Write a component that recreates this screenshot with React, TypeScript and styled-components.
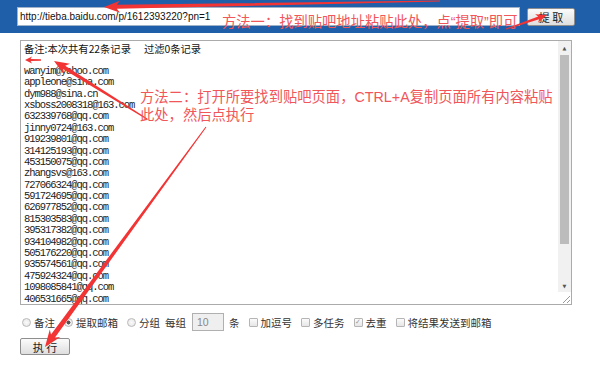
import * as React from "react";
import styled, { createGlobalStyle } from "styled-components";

const GlobalStyle = createGlobalStyle`
  html, body {
    margin: 0;
    padding: 0;
    background: #fff;
  }
  body {
    font-family: "Noto Sans CJK SC", "Liberation Sans", sans-serif;
  }
`;

const emails = [
  "wanyim@yahoo.com",
  "appleone@sina.com",
  "dym988@sina.cn",
  "xsboss2008318@163.com",
  "632339768@qq.com",
  "jinny0724@163.com",
  "919239801@qq.com",
  "314125193@qq.com",
  "453150075@qq.com",
  "zhangsvs@163.com",
  "727066324@qq.com",
  "591724695@qq.com",
  "626977852@qq.com",
  "815303583@qq.com",
  "395317382@qq.com",
  "934104982@qq.com",
  "505176220@qq.com",
  "935574561@qq.com",
  "475924324@qq.com",
  "1098085841@qq.com",
  "406531665@qq.com",
  "583201764@qq.com",
];

type Arrow = {
  x1: number;
  y1: number;
  x2: number;
  y2: number;
  tail: number;
  shaft: number;
  headLen: number;
  headW: number;
};

const arrows: Arrow[] = [
  { x1: 440, y1: 1, x2: 104, y2: 7, tail: 1, shaft: 4, headLen: 16, headW: 12 },
  { x1: 506, y1: 29, x2: 547, y2: 15, tail: 1, shaft: 3, headLen: 11, headW: 9 },
  { x1: 206, y1: 127, x2: 45, y2: 347, tail: 1, shaft: 5, headLen: 17, headW: 13 },
  { x1: 147, y1: 119, x2: 54, y2: 61, tail: 1, shaft: 4, headLen: 15, headW: 12 },
  { x1: 41, y1: 60, x2: 25, y2: 60, tail: 1.5, shaft: 2, headLen: 7, headW: 7 },
];

// tapered arrow outline: thin tail, thicker shaft, head with barbs
const arrowPoints = (a: Arrow) => {
  const dx = a.x2 - a.x1;
  const dy = a.y2 - a.y1;
  const len = Math.hypot(dx, dy);
  const ux = dx / len;
  const uy = dy / len;
  const px = -uy;
  const py = ux;
  const bx = a.x2 - ux * a.headLen;
  const by = a.y2 - uy * a.headLen;
  const nx = a.x2 - ux * a.headLen * 0.8;
  const ny = a.y2 - uy * a.headLen * 0.8;
  const pts = [
    [a.x1 + (px * a.tail) / 2, a.y1 + (py * a.tail) / 2],
    [nx + (px * a.shaft) / 2, ny + (py * a.shaft) / 2],
    [bx + (px * a.headW) / 2, by + (py * a.headW) / 2],
    [a.x2, a.y2],
    [bx - (px * a.headW) / 2, by - (py * a.headW) / 2],
    [nx - (px * a.shaft) / 2, ny - (py * a.shaft) / 2],
    [a.x1 - (px * a.tail) / 2, a.y1 - (py * a.tail) / 2],
  ];
  return pts.map((p) => `${p[0].toFixed(1)},${p[1].toFixed(1)}`).join(" ");
};

type Opt = { kind: "radio" | "check"; label: string; checked?: boolean };

const App: React.FunctionComponent = () => {
  const before: Opt[] = [
    { kind: "radio", label: "备注" },
    { kind: "radio", label: "提取邮箱", checked: true },
    { kind: "radio", label: "分组" },
  ];
  const after: Opt[] = [
    { kind: "check", label: "加逗号" },
    { kind: "check", label: "多任务" },
    { kind: "check", label: "去重", checked: true },
    { kind: "check", label: "将结果发送到邮箱" },
  ];

  const renderOpt = (o: Opt) => (
    <Option key={o.label}>
      {o.kind === "radio" ? (
        <RadioBox checked={!!o.checked} />
      ) : (
        <CheckBox>{o.checked ? "✓" : ""}</CheckBox>
      )}
      <span>{o.label}</span>
    </Option>
  );

  return (
    <Page>
      <GlobalStyle />
      <TopBar>
        <UrlBox>http://tieba.baidu.com/p/1612393220?pn=1</UrlBox>
        <GrayButton $w={48} $h={18}>
          提 取
        </GrayButton>
      </TopBar>
      <Main>
        <TextBox>
          <Lines>
            <NoteLine>
              备注:本次共有22条记录
              <Spacer />
              过滤0条记录
            </NoteLine>
            <Line />
            {emails.map((e) => (
              <Line key={e}>{e}</Line>
            ))}
          </Lines>
          <ScrollBar>
            <ScrollBtn>▲</ScrollBtn>
            <Track>
              <Thumb />
            </Track>
            <ScrollBtn>▼</ScrollBtn>
            <Grip>
              <svg width="11" height="11" viewBox="0 0 11 11">
                <path d="M10 3 L3 10 M10 7 L7 10" stroke="#9a9a9a" strokeWidth="1" />
              </svg>
            </Grip>
          </ScrollBar>
        </TextBox>
        <Options>
          {before.map(renderOpt)}
          <Plain>每组</Plain>
          <CountBox>10</CountBox>
          <Plain>条</Plain>
          {after.map(renderOpt)}
        </Options>
        <GrayButton $w={50} $h={17}>
          执 行
        </GrayButton>
      </Main>

      <Overlay width="600" height="366" viewBox="0 0 600 366">
        {arrows.map((a, i) => (
          <polygon key={i} points={arrowPoints(a)} fill="#f23434" />
        ))}
      </Overlay>
      <Annotation $left={222} $top={13}>
        方法一：找到贴吧地址粘贴此处，点“提取”即可
      </Annotation>
      <Annotation $left={140} $top={88}>
        方法二：打开所要找到贴吧页面，CTRL+A复制页面所有内容粘贴
        <br />
        此处，然后点执行
      </Annotation>
    </Page>
  );
};

export default App;

const Page = styled.div`
  position: relative;
  width: 600px;
  height: 366px;
  overflow: hidden;
  background: #fff;
`;

const TopBar = styled.div`
  height: 33px;
  background: #1f5fa9;
  display: flex;
  align-items: center;
  padding-left: 17px;
  gap: 7px;
`;

const UrlBox = styled.div`
  box-sizing: border-box;
  width: 503px;
  height: 19px;
  background: #fff;
  border: 1px solid #9fb2c8;
  padding-left: 2px;
  font-family: "Liberation Sans", Arial, sans-serif;
  font-size: 10px;
  line-height: 17px;
  color: #111;
  white-space: nowrap;
  overflow: hidden;
`;

const GrayButton = styled.div<{ $w: number; $h: number }>`
  box-sizing: border-box;
  width: ${(p) => p.$w}px;
  height: ${(p) => p.$h}px;
  border: 1px solid #8e8e8e;
  border-radius: 2px;
  background: linear-gradient(#fbfbfb, #dedede);
  display: flex;
  align-items: center;
  justify-content: center;
  font-family: "Noto Sans CJK SC", sans-serif;
  font-size: 11px;
  color: #222;
  white-space: pre;
`;

const Main = styled.div`
  padding: 7px 0 0 20px;
  display: flex;
  flex-direction: column;
`;

const TextBox = styled.div`
  box-sizing: border-box;
  width: 552px;
  height: 265px;
  border: 1px solid #ababab;
  display: flex;
  overflow: hidden;
`;

const Lines = styled.div`
  flex: 1;
  padding: 2px 0 0 3px;
  overflow: hidden;
`;

const Line = styled.div`
  height: 11.4px;
  line-height: 11.4px;
  font-family: "Liberation Mono", monospace;
  font-size: 10.5px;
  letter-spacing: -1.05px;
  color: #222;
  white-space: nowrap;
`;

const NoteLine = styled.div`
  height: 11.4px;
  line-height: 11.4px;
  font-family: "Noto Sans CJK SC", sans-serif;
  font-size: 10.3px;
  color: #111;
  white-space: nowrap;
`;

const Spacer = styled.span`
  display: inline-block;
  width: 13px;
`;

const ScrollBar = styled.div`
  width: 13px;
  background: #f1f1f1;
  display: flex;
  flex-direction: column;
`;

const ScrollBtn = styled.div`
  height: 13px;
  display: flex;
  align-items: center;
  justify-content: center;
  font-size: 5px;
  color: #555;
  font-family: "DejaVu Sans", sans-serif;
`;

const Track = styled.div`
  flex: 1;
  padding: 1px 2px;
  display: flex;
  flex-direction: column;
`;

const Thumb = styled.div`
  height: 189px;
  background: #bcbcbc;
`;

const Grip = styled.div`
  height: 12px;
  background: #fff;
  display: flex;
  align-items: flex-end;
  justify-content: flex-end;
`;

const Options = styled.div`
  display: flex;
  align-items: center;
  height: 18px;
  margin: 8px 0 7px 2px;
  font-family: "Noto Sans CJK SC", sans-serif;
  font-size: 10.5px;
  color: #333;
  gap: 9px;
`;

const Option = styled.label`
  display: flex;
  align-items: center;
  gap: 3px;
`;

const RadioBox = styled.span<{ checked: boolean }>`
  box-sizing: border-box;
  width: 9px;
  height: 9px;
  border-radius: 50%;
  border: 1px solid #b9b9b9;
  background: radial-gradient(
    circle,
    ${(p) => (p.checked ? "#555 0 1.8px, #eee 2.2px" : "#fafafa, #e4e4e4")}
  );
`;

const CheckBox = styled.span`
  box-sizing: border-box;
  width: 9px;
  height: 9px;
  border: 1px solid #b5b5b5;
  border-radius: 1px;
  background: linear-gradient(#fbfbfb, #e6e6e6);
  font-family: "DejaVu Sans", sans-serif;
  font-size: 7px;
  line-height: 7px;
  text-align: center;
  color: #999;
`;

const Plain = styled.span`
  margin-left: -4px;
`;

const CountBox = styled.div`
  box-sizing: border-box;
  width: 32px;
  height: 18px;
  border: 1px solid #b0b0b0;
  background: #efefef;
  padding-left: 4px;
  font-family: "Liberation Sans", sans-serif;
  font-size: 10.5px;
  line-height: 16px;
  color: #888;
  margin-left: -3px;
`;

const Overlay = styled.svg`
  position: absolute;
  left: 0;
  top: 0;
  pointer-events: none;
`;

const Annotation = styled.div<{ $left: number; $top: number }>`
  position: absolute;
  left: ${(p) => p.$left}px;
  top: ${(p) => p.$top}px;
  font-family: "Liberation Sans", "Noto Sans CJK SC", sans-serif;
  font-size: 14.3px;
  line-height: 18px;
  color: #f0565a;
  white-space: nowrap;
  pointer-events: none;
`;
